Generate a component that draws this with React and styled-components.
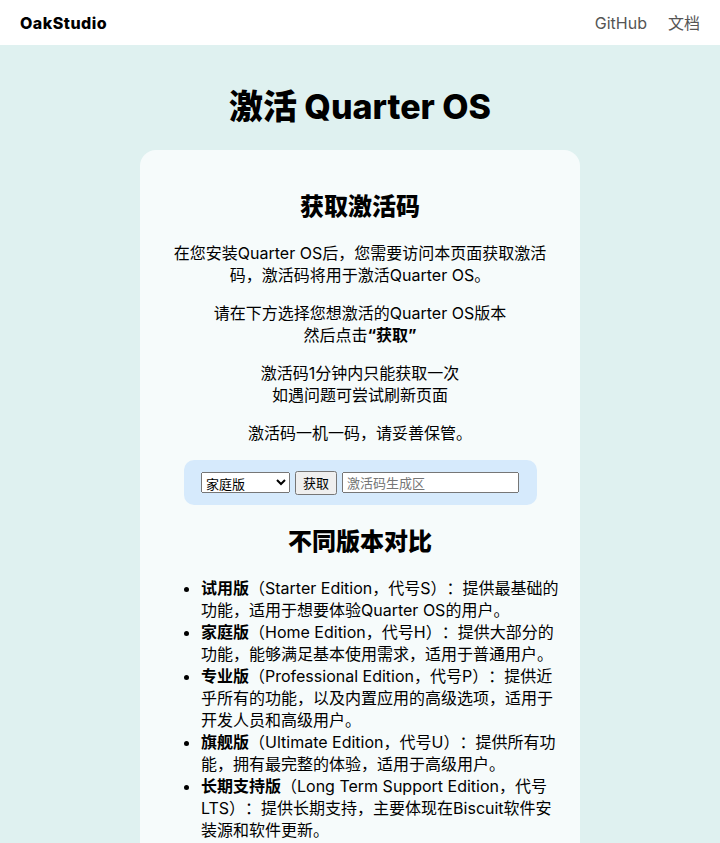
import React, { useState } from "react";
import styled, { createGlobalStyle } from "styled-components";

const GlobalStyle = createGlobalStyle`
  html, body {
    margin: 0;
    padding: 0;
    background: #dff1f0;
    font-family: "Inter", "Noto Sans CJK SC", sans-serif;
    color: #000;
    text-spacing-trim: space-all;
  }
`;

const Header = styled.header`
  height: 45px;
  background: #fff;
  display: flex;
  align-items: center;
  justify-content: space-between;
  padding: 0 20px;
`;

const Brand = styled.div`
  font-weight: 800;
  font-size: 16px;
  letter-spacing: 0.5px;
`;

const Nav = styled.nav`
  display: flex;
  align-items: center;
  gap: 21px;
`;

const NavLink = styled.a`
  color: #555;
  font-size: 16px;
  line-height: 22px;
  text-decoration: none;
`;

const Main = styled.main`
  display: flex;
  flex-direction: column;
  align-items: center;
  padding-top: 42px;
`;

const Title = styled.h1`
  margin: 0 0 23px;
  font-size: 34px;
  line-height: 40px;
  font-weight: 800;
`;

const Card = styled.section`
  width: 440px;
  box-sizing: border-box;
  background: #f6fbfb;
  border-radius: 16px;
  padding: 20px 20px 40px;
  text-align: center;
`;

const Heading = styled.h2`
  margin: 22px 0 20px;
  font-size: 24px;
  line-height: 30px;
  font-weight: 800;
`;

const Para = styled.p`
  margin: 16px 0;
  font-size: 16px;
  line-height: 22px;
`;

const FormBox = styled.div`
  margin: 16px auto 0;
  width: 353px;
  height: 45px;
  box-sizing: border-box;
  background: #d6eafc;
  border-radius: 10px;
  display: flex;
  align-items: center;
  justify-content: center;
  gap: 5px;
`;

const Select = styled.select`
  width: 89px;
  height: 21px;
  font-size: 13px;
  font-family: "Noto Sans CJK SC", sans-serif;
  padding: 0;
`;

const Button = styled.button`
  height: 24px;
  width: 42px;
  font-size: 13px;
  font-family: "Noto Sans CJK SC", sans-serif;
  padding: 0;
`;

const Input = styled.input`
  width: 177px;
  height: 21px;
  box-sizing: border-box;
  font-size: 13px;
  font-family: "Noto Sans CJK SC", sans-serif;
  padding: 1px 3px;
`;

const List = styled.ul`
  margin: 16px -4px 0 0;
  padding-left: 41px;
  padding-right: 0;
  text-align: left;
  font-size: 16px;
  line-height: 22px;
`;

const editions = [
  ["试用版", "（Starter Edition，代号S）：提供最基础的功能，适用于想要体验Quarter OS的用户。"],
  ["家庭版", "（Home Edition，代号H）：提供大部分的功能，能够满足基本使用需求，适用于普通用户。"],
  ["专业版", "（Professional Edition，代号P）：提供近乎所有的功能，以及内置应用的高级选项，适用于开发人员和高级用户。"],
  ["旗舰版", "（Ultimate Edition，代号U）：提供所有功能，拥有最完整的体验，适用于高级用户。"],
  ["长期支持版", "（Long Term Support Edition，代号LTS）：提供长期支持，主要体现在Biscuit软件安装源和软件更新。"],
];

export default function App() {
  const [edition, setEdition] = useState("H");
  const [code, setCode] = useState("");

  return (
    <>
      <GlobalStyle />
      <Header>
        <Brand>OakStudio</Brand>
        <Nav>
          <NavLink href="#">GitHub</NavLink>
          <NavLink href="#">文档</NavLink>
        </Nav>
      </Header>
      <Main>
        <Title>激活 Quarter OS</Title>
        <Card>
          <Heading>获取激活码</Heading>
          <Para>在您安装Quarter OS后，您需要访问本页面获取激活码，激活码将用于激活Quarter OS。</Para>
          <Para>
            请在下方选择您想激活的Quarter OS版本
            <br />
            然后点击<b>“获取”</b>
          </Para>
          <Para>
            激活码1分钟内只能获取一次
            <br />
            如遇问题可尝试刷新页面
          </Para>
          <Para>激活码一机一码，请妥善保管。</Para>
          <FormBox>
            <Select value={edition} onChange={(e) => setEdition(e.target.value)}>
              <option value="S">试用版</option>
              <option value="H">家庭版</option>
              <option value="P">专业版</option>
              <option value="U">旗舰版</option>
              <option value="LTS">长期支持版</option>
            </Select>
            <Button onClick={() => setCode("")}>获取</Button>
            <Input value={code} readOnly placeholder="激活码生成区" />
          </FormBox>
          <Heading>不同版本对比</Heading>
          <List>
            {editions.map(([name, desc]) => (
              <li key={name}>
                <b>{name}</b>
                {desc}
              </li>
            ))}
          </List>
        </Card>
      </Main>
    </>
  );
}
